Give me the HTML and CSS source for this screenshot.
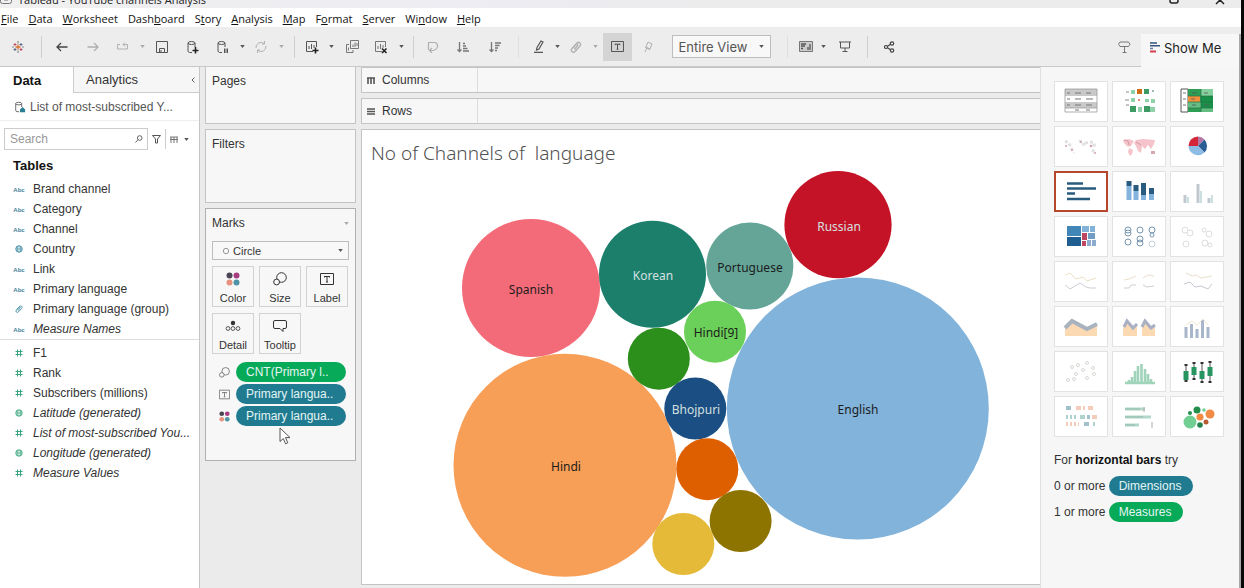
FILE: index.html
```html
<!DOCTYPE html>
<html lang="en">
<head>
<meta charset="utf-8">
<title>Tableau - YouTube channels Analysis</title>
<link rel="stylesheet" href="styles.css">
</head>
<body>
<svg class="defs" aria-hidden="true">
  <symbol id="caret" viewBox="0 0 6 4"><path d="M0 0h6L3 4z" fill="currentColor"/></symbol>
  <symbol id="abc" viewBox="0 0 12 8"><text x="6" y="7" text-anchor="middle" class="abc-text">Abc</text></symbol>
  <symbol id="hash" viewBox="0 0 8 8"><path d="M2.500 .5v7M5.500 .5v7M.5 2.500h7M.5 5.500h7" stroke="currentColor" fill="none"/></symbol>
  <symbol id="globe" viewBox="0 0 8 8"><circle cx="4" cy="4" r="3.200" fill="none" stroke="currentColor"/><path d="M1 4h6M4 1v6M2.500 1.500v5M5.500 1.500v5" stroke="currentColor" stroke-width=".6"/></symbol>
  <symbol id="clip" viewBox="0 0 12 12"><path d="M3 7l4-5a2 2 0 0 1 3 3l-5 5.500a2 2 0 0 1-3-3l4-4.500a1 1 0 0 1 1.500 1.500L4.500 8.500" fill="none" stroke="currentColor" stroke-width="1.300"/></symbol>
  <symbol id="four" viewBox="0 0 14 14"><circle cx="3.500" cy="3.500" r="3" fill="#4a4453"/><circle cx="10.500" cy="3.500" r="3" fill="#a83c80"/><circle cx="3.500" cy="10.500" r="3" fill="#e8917c"/><circle cx="10.500" cy="10.500" r="3" fill="#4f93a8"/></symbol>
  <symbol id="size" viewBox="0 0 14 14"><circle cx="8.500" cy="5.500" r="4.800" fill="none" stroke="currentColor"/><circle cx="3.600" cy="10" r="2.900" fill="#f7f7f7" stroke="currentColor"/></symbol>
  <symbol id="label" viewBox="0 0 14 12"><path d="M.5 .5h13v11H.5zM4.500 3.500h5M7 3.500v5.500M6 9h2M4.500 3v1.500M9.500 3v1.500" fill="none" stroke="currentColor"/></symbol>
  <symbol id="db" viewBox="0 0 14 14"><path d="M6 12.500H3.500Q2 12 2 11V3q0-1.500 3.500-1.500T9 3v4M2 3q0 1.500 3.500 1.500T9 3" fill="none" stroke="currentColor"/></symbol>
  <symbol id="bars" viewBox="0 0 14 14"><path d="M8 11.500H1.500v-10h10V7M4 9V6M6.500 9V4M9 8V5" fill="none" stroke="currentColor"/></symbol>
</svg>
<div class="window">
  <header class="titlebar">
    <svg class="app-icon" viewBox="0 0 12 12" aria-hidden="true"><path d="M.5 0v9.500q0 2 2 2h7q2 0 2-2V0M4 8h4" fill="none" stroke="#777"/></svg>
    <span class="title-text">Tableau - YouTube channels Analysis</span>
    <svg class="win-controls" viewBox="0 0 60 6" aria-hidden="true"><path d="M5 0v1q0 2 2 2h4q2 0 2-2V0M51 4l4-4 4 4" fill="none" stroke="#222" stroke-width="1.500"/></svg>
  </header>
  <nav class="menu" aria-label="Main">
    <a href="#"><u>F</u>ile</a><a href="#"><u>D</u>ata</a><a href="#"><u>W</u>orksheet</a><a href="#">Dash<u>b</u>oard</a><a href="#">S<u>t</u>ory</a><a href="#"><u>A</u>nalysis</a><a href="#"><u>M</u>ap</a><a href="#">F<u>o</u>rmat</a><a href="#"><u>S</u>erver</a><a href="#">Wi<u>n</u>dow</a><a href="#"><u>H</u>elp</a>
  </nav>
  <div class="toolbar">
    <button aria-label="Start page"><svg width="12" height="12" viewBox="0 0 12 12" fill="none"><path d="M6 3.500v5M3.500 6h5" stroke="#d8702c" stroke-width="1.300"/><path d="M6 0v2.500M6 9.500V12" stroke="#777"/><path d="M3 2v3M1.500 3.500h3M9 7v3M7.500 8.500h3" stroke="#c2506a"/><path d="M9 2v3M7.500 3.500h3M3 7v3M1.500 8.500h3" stroke="#59698a"/><path d="M0 6h2M10 6h2" stroke="#888"/></svg></button>
    <span class="sep"></span>
    <button aria-label="Undo"><svg width="12" height="10" viewBox="0 0 12 10"><path d="M5 1L1 5l4 4M1 5h10.500" fill="none" stroke="#444" stroke-width="1.300"/></svg></button>
    <button class="dim" aria-label="Redo"><svg width="12" height="10" viewBox="0 0 12 10"><path d="M7 1l4 4-4 4M11 5H.5" fill="none" stroke="currentColor" stroke-width="1.300"/></svg></button>
    <button class="dim" aria-label="Replay"><svg width="13" height="9" viewBox="0 0 13 9"><path d="M4 2.500H1.500v4.500h10V2.500H7M9 .5l-2 2 2 2" fill="none" stroke="currentColor"/></svg></button>
    <svg class="caret dim"><use href="#caret"/></svg>
    <button aria-label="Save"><svg width="12" height="12" viewBox="0 0 12 12"><path d="M.5 .5h11v11H.5zM3.500 11V7.500h5V11M5 9v2" fill="none" stroke="currentColor"/></svg></button>
    <button aria-label="New data source"><svg width="14" height="14"><use href="#db"/><path d="M9.500 7v6.500M6.500 10.500h6" stroke="#222" stroke-width="1.600"/></svg></button>
    <button aria-label="Pause auto updates"><svg width="14" height="14"><use href="#db"/><path d="M8 8.500h1.500V13H8zM10.500 8.500H12V13h-1.500z" fill="#555"/></svg></button>
    <svg class="caret"><use href="#caret"/></svg>
    <button class="dim" aria-label="Refresh"><svg width="12" height="12" viewBox="0 0 12 12"><path d="M1 7a5 5 0 0 1 8-4.500M11 5a5 5 0 0 1-8 4.500M9.500 0v3H7M2.500 12V9H5" fill="none" stroke="currentColor"/></svg></button>
    <svg class="caret dim"><use href="#caret"/></svg>
    <span class="sep"></span>
    <button aria-label="New worksheet"><svg width="14" height="14"><use href="#bars"/><path d="M10.500 7.500v6M7.500 10.500h6" stroke="#222" stroke-width="1.600"/></svg></button>
    <svg class="caret"><use href="#caret"/></svg>
    <button class="mid" aria-label="Duplicate"><svg width="13" height="13" viewBox="0 0 13 13"><path d="M4.500 .5h8v8h-8zM3 4.500H.5v8H7V10M7 7V4.500M9 7V2.500M11 6V3M2.500 10.500V7.500" fill="none" stroke="currentColor"/></svg></button>
    <button class="mid" aria-label="Clear sheet"><svg width="14" height="14"><use href="#bars"/><path d="M8 8.500l4.500 4.500M12.500 8.500L8 13" stroke="#222" stroke-width="1.600"/></svg></button>
    <svg class="caret"><use href="#caret"/></svg>
    <span class="sep"></span>
    <button class="dim" aria-label="Swap rows and columns"><svg width="12" height="12" viewBox="0 0 12 12"><path d="M1.500 9V1.500h6.500q3 1 2.500 4T6 9.500H3M5 7L2.500 9.500 5 12" fill="none" stroke="currentColor" stroke-width="1.200"/></svg></button>
    <button class="mid" aria-label="Sort ascending"><svg width="12" height="12" viewBox="0 0 12 12"><path d="M2.500 1v9.500M.5 8.500l2 2 2-2M6 2.500h2M6 5h3M6 7.500h4.500M6 10h6" fill="none" stroke="currentColor" stroke-width="1.300"/></svg></button>
    <button class="mid" aria-label="Sort descending"><svg width="12" height="12" viewBox="0 0 12 12"><path d="M2.500 1v9.500M.5 8.500l2 2 2-2M6 2h6M6 4.500h4.500M6 7h3M6 9.500h2" fill="none" stroke="currentColor" stroke-width="1.300"/></svg></button>
    <span class="sep faint"></span>
    <button aria-label="Highlight"><svg width="11" height="13" viewBox="0 0 11 13"><path d="M3 7.500L7 1l2 1-4 7-2.500 1zM0 12.300h9" fill="none" stroke="currentColor" stroke-width="1.200"/></svg></button>
    <svg class="caret"><use href="#caret"/></svg>
    <button class="dim" aria-label="Group members"><svg width="12" height="12"><use href="#clip"/></svg></button>
    <svg class="caret dim"><use href="#caret"/></svg>
    <button class="pressed" aria-label="Show mark labels" aria-pressed="true"><svg width="13" height="11"><use href="#label"/></svg></button>
    <button class="dim" aria-label="Fix axes"><svg width="9" height="12" viewBox="0 0 9 12"><path d="M4 1l4 2-2 5-4-2zM1 6l5 3M3 7l-2 4" fill="none" stroke="currentColor"/></svg></button>
    <div class="combo fit"><select aria-label="Fit"><option>Entire View</option></select><svg class="caret"><use href="#caret"/></svg></div>
    <span class="sep faint"></span>
    <button class="mid" aria-label="Show cards"><svg width="14" height="11" viewBox="0 0 14 11"><path d="M.5 .5h13v10H.5z" fill="#ccc" stroke="currentColor"/><path d="M2 3h5M2 5h4M2 7.500h2M9 9V6M11 9V3" stroke="#555" stroke-width="1.300"/></svg></button>
    <svg class="caret"><use href="#caret"/></svg>
    <button aria-label="Presentation mode"><svg width="12" height="11" viewBox="0 0 12 11"><path d="M0 1h12M1.500 1v6h9V1M6 7v3M3.500 10.500h5" fill="none" stroke="currentColor"/></svg></button>
    <span class="sep"></span>
    <button aria-label="Share"><svg width="11" height="12" viewBox="0 0 11 12" fill="none" stroke="#444" stroke-width="1.200"><circle cx="2" cy="6" r="1.500"/><circle cx="8" cy="2.500" r="1.700"/><circle cx="8" cy="9.500" r="1.700"/><path d="M3.500 5.300l3-2M3.500 6.800l3 2"/></svg></button>
    <span></span>
    <button class="mid" aria-label="Data guide"><svg width="13" height="12" viewBox="0 0 13 12"><path d="M2 1h8.500L12 3.200 10.500 5.500H2L.5 3.200zM6.500 5.500V11M4.500 11.500h4" fill="none" stroke="currentColor"/></svg></button>
    <button class="showme-tab"><svg width="10" height="11" viewBox="0 0 10 11"><path d="M0 1h7M0 3.700h10" stroke="#33557f" stroke-width="1.600"/><path d="M0 6.500h3" stroke="#6f7fa0" stroke-width="1.600"/><path d="M0 9.500h6" stroke="#d63f4d" stroke-width="2"/></svg>Show Me</button>
  </div>
  <main class="workspace">
    <aside class="data-pane">
      <div class="tabs"><button class="tab active">Data</button><button class="tab">Analytics<svg width="4" height="6" viewBox="0 0 4 6"><path d="M3.500 .5L1 3l2.500 2.500" fill="none" stroke="#666"/></svg></button></div>
      <div class="source"><svg width="12" height="12" viewBox="0 0 14 14"><use href="#db"/><path d="M10 7l3 3v3H7v-3z" fill="#2a7f92"/></svg><span>List of most-subscribed Y...</span></div>
      <div class="search-row">
        <div class="search"><input type="text" placeholder="Search" aria-label="Search"><svg width="8" height="8" viewBox="0 0 8 8"><circle cx="4.700" cy="3" r="2.300" fill="none" stroke="#666"/><path d="M3 4.700L.5 7.500" stroke="#666"/></svg></div>
        <button aria-label="Filter fields"><svg width="9" height="9" viewBox="0 0 9 9"><path d="M.5 .5h8L5.500 4v4h-2V4z" fill="none" stroke="#555"/></svg></button>
        <button class="view-as" aria-label="View as"><svg width="8" height="7" viewBox="0 0 8 7"><path d="M0 1h8M0 3.500h8M1 1v6M4 1v6M7 1v6" stroke="#777"/></svg><svg class="caret"><use href="#caret"/></svg></button>
      </div>
      <h2>Tables</h2>
      <ul class="fields dims">
        <li><svg class="wide"><use href="#abc"/></svg>Brand channel</li>
        <li><svg class="wide"><use href="#abc"/></svg>Category</li>
        <li><svg class="wide"><use href="#abc"/></svg>Channel</li>
        <li><svg><use href="#globe"/></svg>Country</li>
        <li><svg class="wide"><use href="#abc"/></svg>Link</li>
        <li><svg class="wide"><use href="#abc"/></svg>Primary language</li>
        <li><svg><use href="#clip"/></svg>Primary language (group)</li>
        <li class="gen"><svg class="wide"><use href="#abc"/></svg>Measure Names</li>
      </ul>
      <ul class="fields measures">
        <li><svg><use href="#hash"/></svg>F1</li>
        <li><svg><use href="#hash"/></svg>Rank</li>
        <li><svg><use href="#hash"/></svg>Subscribers (millions)</li>
        <li class="gen"><svg><use href="#globe"/></svg>Latitude (generated)</li>
        <li class="gen"><svg><use href="#hash"/></svg>List of most-subscribed You...</li>
        <li class="gen"><svg><use href="#globe"/></svg>Longitude (generated)</li>
        <li class="gen"><svg><use href="#hash"/></svg>Measure Values</li>
      </ul>
    </aside>
    <section class="cards">
      <div class="card pages"><h3>Pages</h3></div>
      <div class="card filters"><h3>Filters</h3></div>
      <div class="card marks">
        <h3>Marks<svg class="caret dim"><use href="#caret"/></svg></h3>
        <div class="combo mark-type"><svg class="ring" viewBox="0 0 8 8"><circle cx="4" cy="4" r="2.700" fill="none" stroke="#999"/></svg><select aria-label="Mark type"><option>Circle</option></select><svg class="caret"><use href="#caret"/></svg></div>
        <div class="mark-buttons">
          <button><svg width="14" height="14"><use href="#four"/></svg>Color</button>
          <button><svg width="14" height="14"><use href="#size"/></svg>Size</button>
          <button><svg width="14" height="14"><use href="#label"/></svg>Label</button>
          <button><svg width="16" height="14" viewBox="0 0 16 14"><circle cx="8" cy="4" r="2.200" fill="#333"/><g fill="none" stroke="#555"><circle cx="3" cy="9.500" r="1.900"/><circle cx="8" cy="9.500" r="1.900"/><circle cx="13" cy="9.500" r="1.900"/></g></svg>Detail</button>
          <button><svg width="14" height="14" viewBox="0 0 14 14"><path d="M2 1.500h10q1.500 0 1.500 1.500v5q0 1.500-1.500 1.500h-2v3l-3-3H2Q.5 9.500.5 8V3q0-1.500 1.500-1.500z" fill="none" stroke="currentColor"/></svg>Tooltip</button>
        </div>
        <ul class="pills">
          <li><svg><use href="#size"/></svg><button class="pill green">CNT(Primary l..</button></li>
          <li><svg><use href="#label"/></svg><button class="pill blue">Primary langua..</button></li>
          <li><svg><use href="#four"/></svg><button class="pill blue">Primary langua..</button></li>
        </ul>
        <svg class="cursor" viewBox="0 0 12 18" aria-hidden="true"><path d="M1 1v13.500l3.300-3 2.300 5.300 2.200-1-2.300-5.200H11z" fill="#fff" stroke="#555"/></svg>
      </div>
    </section>
    <section class="sheet-area">
      <div class="shelf"><span><svg width="8" height="7" viewBox="0 0 8 7"><path d="M0 1h8M1 1v6M4 1v6M7 1v6" stroke="#555" stroke-width="1.600"/></svg>Columns</span></div>
      <div class="shelf"><span><svg width="8" height="7" viewBox="0 0 8 7"><path d="M0 1h8M0 3.500h8M0 6h8" stroke="#555" stroke-width="1.400"/></svg>Rows</span></div>
      <article class="sheet">
        <h1>No of Channels of  language</h1>
        <svg class="bubbles" viewBox="362 170 678 414" role="img" aria-label="Packed bubbles by language">
          <circle cx="531" cy="288" r="69" fill="#f36b79"/>
          <circle cx="652.500" cy="274.200" r="53.500" fill="#1b7f6c"/>
          <circle cx="749.800" cy="266" r="43.600" fill="#64a598"/>
          <circle cx="838" cy="224.700" r="53.600" fill="#c41226"/>
          <circle cx="857.800" cy="408.500" r="131" fill="#82b3da"/>
          <circle cx="565" cy="465.300" r="111.500" fill="#f79e57"/>
          <circle cx="715" cy="331.700" r="31" fill="#6bd059"/>
          <circle cx="658.800" cy="358.700" r="31" fill="#2c8f1c"/>
          <circle cx="695.300" cy="408.500" r="31" fill="#1b4e82"/>
          <circle cx="707.300" cy="469.200" r="31" fill="#de5f00"/>
          <circle cx="740.600" cy="521" r="31" fill="#8d7400"/>
          <circle cx="683.300" cy="544" r="31" fill="#e4ba38"/>
          <text x="531" y="294">Spanish</text>
          <text class="light" x="653" y="280">Korean</text>
          <text x="750" y="272">Portuguese</text>
          <text class="light" x="839" y="231">Russian</text>
          <text x="858" y="414">English</text>
          <text x="566" y="471">Hindi</text>
          <text x="716" y="337">Hindi[9]</text>
          <text class="light" x="696" y="414">Bhojpuri</text>
        </svg>
      </article>
    </section>
    <aside class="showme">
      <div class="thumbs">
        <button aria-label="Text table"><svg viewBox="0 0 54 41"><path d="M11 8h32v7H11zM11 21h32v6H11z" fill="#c9c9c9"/><path d="M11 8h32v23H11zM11 27h32" fill="none" stroke="#999" stroke-width=".8"/><path d="M13 12h3M21 12h6M32 12h5M13 18h3M21 18h6M32 18h7M13 24h3M21 24h6M32 24h6M21 29h4M32 29h4" stroke="#777"/></svg></button>
        <button aria-label="Heat map"><svg viewBox="0 0 54 41"><path d="M14 11h3M13 19h4M14 24h3" stroke="#888"/><g fill="#8fd1a8"><path d="M19 9h4v4h-4zM19 17h4v4h-4zM33 18h4v3h-4zM39 18h4v4h-4zM26 26h4v5h-4zM38 26h5v5h-5z"/></g><g fill="#3c9b63"><path d="M32 8h5v5h-5zM18 25h6v6h-6zM32 25h6v6h-6z"/></g><path d="M25 8h5v5h-5z" fill="#cf6b12"/><path d="M26 18h2v2h-2z" fill="#e58a70"/><path d="M40 9h2v2h-2z" fill="#9ba"/></svg></button>
        <button aria-label="Highlight table"><svg viewBox="0 0 54 41"><path d="M11 8h7v23h-7z" fill="#fff" stroke="#555"/><path d="M18 8h13v23H18z" fill="#2f9e55"/><path d="M31 8h12v23H31z" fill="#85cf9d"/><path d="M31 15h12v12H31z" fill="#189048"/><path d="M18 15h12v6H18z" fill="#f2903c"/><path d="M18 21h13v6H18zM31 27h12v4H31z" fill="#64bd82"/><path d="M18 15h25M18 21h25M18 27h25M31 8v23" stroke="#2a7048" stroke-width=".7"/><path d="M13 12h3M13 18h3M13 24h3M22 12h5M34 12h4M21 18h4M22 24h4M34 24h5" stroke="#555" stroke-width=".8"/></svg></button>
        <button aria-label="Symbol map"><svg viewBox="0 0 54 41"><path d="M11 15l4 2 2 5 3 5M25 15l4 1 1 4M31 17l8-1 2 5M38 24l4 3" fill="none" stroke="#e2e0e0" stroke-width="3" stroke-dasharray="3 2"/><g fill="#cfa5ad"><circle cx="12" cy="20" r="1"/><circle cx="18" cy="24" r="1"/><circle cx="27" cy="16" r="1"/><circle cx="37" cy="20" r="1.300"/><circle cx="41" cy="27" r="1"/></g></svg></button>
        <button aria-label="Filled map"><svg viewBox="0 0 54 41"><path d="M11 14l6-1 5 2-3 5-3 1-4-4zM17 22l4 2-1 4-2 2-2-4zM24 14l7-1 12 1-1 4-3 5-3-4-3 4-3-3-1 7-3-2-2-5-2-3z" fill="#f5c3ca"/><path d="M39 25l4 0v3h-4z" fill="#d9a6af"/><path d="M12 14l4 1 1 4M24 16l5 3" fill="none" stroke="#d499a4"/></svg></button>
        <button aria-label="Pie chart"><svg viewBox="0 0 54 41"><path d="M28 20V10.500a9.500 9.500 0 0 0-9.500 9.500z" fill="#d32638"/><path d="M28 20V10.500a9.500 9.500 0 0 1 6.500 3z" fill="#b676a5"/><path d="M28 20l6.500-6.500a9.500 9.500 0 0 1 0 13z" fill="#295d94"/><path d="M28 20l6.500 6.500A9.500 9.500 0 0 1 18.500 20z" fill="#8dbce5"/></svg></button>
        <button class="selected" aria-label="Horizontal bars"><svg viewBox="0 0 54 41"><path d="M13 12.500h16M13 17.500h29M13 22.500h8M13 28h23" stroke="#285b7d" stroke-width="2.600"/></svg></button>
        <button aria-label="Stacked bars"><svg viewBox="0 0 54 41"><path d="M17 15v14M24 20v9M31.500 24v5M39.500 22v7" stroke="#84b4de" stroke-width="5"/><path d="M17 10v5M24 14v6M31.500 12v12M39.500 17v6" stroke="#285b7d" stroke-width="5"/></svg></button>
        <button aria-label="Side-by-side bars"><svg viewBox="0 0 54 41"><path d="M15 32v-8M28 32V13M39 32v-5" stroke="#bfc9cf" stroke-width="3"/><path d="M18 32v-6M31 32V20M42 32v-8" stroke="#ccdfe0" stroke-width="2"/></svg></button>
        <button aria-label="Treemap"><svg viewBox="0 0 54 41"><path d="M13 10h14v10H13z" fill="#4286b8"/><path d="M13 21h14v9H13z" fill="#205d91"/><path d="M28 10h7v6h-7zM36 10h5v6h-5z" fill="#82b2d7"/><path d="M28 17h5v7h-5zM28 25h4v5h-4z" fill="#bd4661"/><path d="M34 17h7v6h-7z" fill="#719dc3"/><path d="M33 24h4v6h-4zM38 24h4v6h-4z" fill="#8eacd0"/></svg></button>
        <button aria-label="Circle views"><svg viewBox="0 0 54 41" fill="none" stroke="#7896b2"><circle cx="16" cy="14" r="3"/><circle cx="16" cy="17" r="3"/><circle cx="28" cy="14" r="3"/><circle cx="40" cy="14" r="3"/><circle cx="16" cy="26" r="3"/><circle cx="28" cy="23" r="3"/><circle cx="28" cy="27" r="3"/><circle cx="40" cy="19" r="2"/><circle cx="40" cy="28" r="3" stroke="#c2d3e0"/></svg></button>
        <button aria-label="Side-by-side circles"><svg viewBox="0 0 54 41" fill="none" stroke="#dedede"><circle cx="15" cy="14" r="3"/><circle cx="20" cy="17" r="3"/><circle cx="16" cy="28" r="3"/><circle cx="34" cy="14" r="2"/><circle cx="39" cy="18" r="3"/><circle cx="35" cy="27" r="3"/><circle cx="40" cy="29" r="2"/></svg></button>
        <button aria-label="Continuous lines"><svg viewBox="0 0 54 41" fill="none"><path d="M11 14l5-2 6 6 7-2 4 4 9-3" stroke="#ecdfc4"/><path d="M11 24l5 4 10-6 6 4 4 1h6" stroke="#cfcdd6"/></svg></button>
        <button aria-label="Discrete lines"><svg viewBox="0 0 54 41" fill="none"><path d="M12 19l5-1 7-3M31 17l5-3 6 1" stroke="#eadfca"/><path d="M12 27h5l2-3h5M31 24l4 2 7-1" stroke="#cecdd3"/></svg></button>
        <button aria-label="Dual lines"><svg viewBox="0 0 54 41" fill="none"><path d="M16 12l6 3 4-1 5 3 11-2" stroke="#e9e0cc"/><path d="M14 23l6-2 5 5 6-1 7 3 4-5" stroke="#c8c8d2"/></svg></button>
        <button aria-label="Continuous area"><svg viewBox="0 0 54 41"><path d="M11 21l7-8 15 8 10-4v13H11z" fill="#fad9b3"/><path d="M11 22l7-7 15 8 10-5" fill="none" stroke="#a9b3bf" stroke-width="4"/></svg></button>
        <button aria-label="Discrete area"><svg viewBox="0 0 54 41"><path d="M11 30v-8l4-7 5 7 5-5v13zM30 30V18l3-4 6 7 4-2v11z" fill="#fad9b3"/><path d="M12 21l3-6 6 7 4-4M30 21l3-6 6 7 4-3" fill="none" stroke="#a9b0c4" stroke-width="3"/></svg></button>
        <button aria-label="Dual combination"><svg viewBox="0 0 54 41"><path d="M16 32V21M21.500 32V18M27 32v-9M32.500 32V14M38 32V21" stroke="#a7b6ca" stroke-width="3"/><path d="M16 19l6-4 5 4 6-6 5 6" fill="none" stroke="#ece6cf"/></svg></button>
        <button aria-label="Scatter plot"><svg viewBox="0 0 54 41" fill="none" stroke="#d6dad4"><circle cx="14" cy="29" r="1.500"/><circle cx="20" cy="28" r="1.500"/><circle cx="22" cy="23" r="1.500"/><circle cx="18" cy="16" r="1.500"/><circle cx="24" cy="14" r="1.500"/><circle cx="29" cy="19" r="1.500"/><circle cx="33" cy="12" r="1.500"/><circle cx="39" cy="17" r="1.500"/><circle cx="33" cy="27" r="1.500"/><circle cx="40" cy="23" r="1.500"/></svg></button>
        <button aria-label="Histogram"><svg viewBox="0 0 54 41"><path d="M13 32h30M17 32v-3M20 32v-6M23 32V20M26 32V15M29.500 32V13M33 32V18M36 32v-9M39 32v-4" fill="none" stroke="#9fd4bb" stroke-width="2.600"/></svg></button>
        <button aria-label="Box plot"><svg viewBox="0 0 54 41"><path d="M16 14v17M24 12v17M32 12v19M40 11v20" stroke="#555"/><path d="M16 20v9M24 16v8M32 20v8M40 16v9" stroke="#269560" stroke-width="5" /><path d="M14.500 14h3M22.500 12h3M30.500 12h3M38.500 11h3M14.500 30h3M22.500 28h3M30.500 31h3M38.500 31h3" stroke="#333" stroke-width="2"/></svg></button>
        <button aria-label="Gantt"><svg viewBox="0 0 54 41"><path d="M12 12h5M33 21h3M30 28h5" stroke="#a3c1cd" stroke-width="4"/><path d="M22 12h5M29 12h2M34 12h5M38 21h5M12 28h2M16 28h2M20 28h2M24 28h1" stroke="#f3ccba" stroke-width="4"/><path d="M12 21h2M16 21h2M20 21h2M26 21h5M39 28h2" stroke="#aed3cc" stroke-width="4"/></svg></button>
        <button aria-label="Bullet graph"><svg viewBox="0 0 54 41"><path d="M13 13h20M13 21h26M13 29h14" stroke="#b1d8c8" stroke-width="3"/><path d="M13 13h15M13 21h18M13 29h10" stroke="#93b9aa"/><path d="M32 11v5M40 26v6" stroke="#aaa"/></svg></button>
        <button aria-label="Packed bubbles"><svg viewBox="0 0 54 41"><circle cx="20" cy="26" r="6.500" fill="#71cf94"/><circle cx="27" cy="14" r="3.500" fill="#218e4c"/><circle cx="20" cy="17" r="2" fill="#218e4c"/><circle cx="30" cy="21" r="3.600" fill="#f18a42"/><circle cx="40" cy="18" r="4.500" fill="#f18a42"/><circle cx="30" cy="29" r="2.800" fill="#23834c"/><circle cx="36" cy="26" r="2.500" fill="#b65b32"/><circle cx="34" cy="14" r="1.800" fill="#71cf94"/></svg></button>
      </div>
      <div class="hint">
        <p>For <b>horizontal bars</b> try</p>
        <p>0 or more <span class="pill blue">Dimensions</span></p>
        <p>1 or more <span class="pill green">Measures</span></p>
      </div>
    </aside>
  </main>
</div>
</body>
</html>
```

FILE: styles.css
```css
* { box-sizing: border-box; }
body { margin: 0; font-family: "Liberation Sans", Arial, sans-serif; font-size: 12px; color: #333; background: #ebebeb; }
button, select, input { font: inherit; color: inherit; margin: 0; }
button { border: 0; padding: 0; background: none; }
h1, h2, h3, p, ul { margin: 0; padding: 0; font-weight: normal; }
ul { list-style: none; }
.defs { position: absolute; width: 0; height: 0; }
.window { min-height: 100vh; display: flex; flex-direction: column; border-right: 3px solid #080808; }

.titlebar { height: 8px; overflow: hidden; display: flex; align-items: flex-end; gap: 6px; background: linear-gradient(90deg, #f0f0f0, #ececf2 40%, #ececec 60%); }
.title-text { font: 11px/16px "Open Sans", sans-serif; color: #222; flex: 1; }
.app-icon { width: 12px; height: 12px; align-self: flex-end; margin-bottom: 4px; flex: none; }
.win-controls { width: 60px; height: 6px; margin: 0 16px 2px 0; }
.menu { display: flex; gap: 10px; height: 19px; padding-left: 1px; background: #fff; align-items: center; font: 11px/16px "Open Sans", sans-serif; }
.menu a { color: #111; text-decoration: none; padding-top: 2px; }

.toolbar {
  display: grid; height: 40px; align-items: center; justify-items: center; background: #ededed; border-bottom: 1px solid #c9c9c9; color: #555;
  grid-template-columns: 36px 10px 32px 30px 28px 12px 28px 34px 26px 12px 26px 14px 12px 24px 14px 28px 30px 10px 14px 26px 34px 30px 16px 26px 10px 28px 10px 35px 26px 120px 12px 25px 10px 34px 10px 34px 1fr 34px 100px;
}
.toolbar button { display: flex; align-items: center; justify-content: center; height: 28px; }
.sep { width: 1px; height: 22px; background: #cfcfcf; }
.sep.faint { background: #dedede; }
.dim { color: #b0b0b0; }
.mid { color: #777; }
.caret { width: 5px; height: 3px; color: #555; }
.caret.dim { color: #aaa; }
.toolbar .pressed { width: 29px; background: #d4d4d4; color: #444; }
.combo { display: grid; grid-template-columns: 1fr 16px; align-items: center; justify-items: center; border: 1px solid #bdbdbd; background: #f8f8f8; }
.combo select { grid-area: 1 / 1 / 2 / 3; width: 100%; appearance: none; border: 0; background: none; padding: 0 6px; }
.combo .caret { grid-area: 1 / 2; pointer-events: none; }
.fit { width: 99px; height: 23px; font: 13px "Inter", sans-serif; }
.toolbar .showme-tab { align-self: end; width: 100%; height: 33px; margin-bottom: -1px; padding: 0 12px 6px 9px; gap: 4px; justify-content: flex-start; background: #f7f7f7; border-right: 2px solid #a8a8a8; font: 13px "Inter", sans-serif; color: #222; }

.workspace { flex: 1; display: grid; grid-template-columns: 200px 150px minmax(300px, 1fr) 201px; }
.data-pane { background: #fff; border-right: 1px solid #c6c6c6; }
.tabs { display: grid; grid-template-columns: 73px 1fr; height: 26px; }
.tab { display: flex; align-items: center; justify-content: space-between; font-size: 13px; background: #f6f6f6; border: solid #ccc; border-width: 0 0 1px 1px; padding: 0 4px 0 12px; }
.tab.active { background: #fff; border: 0; font-weight: bold; color: #111; padding-left: 13px; }
.source { display: flex; align-items: center; gap: 4px; height: 28px; padding-left: 14px; border-bottom: 1px solid #eee; color: #555; }
.search-row { display: flex; align-items: center; gap: 4px; padding: 7px 8px 0 4px; }
.search { display: flex; align-items: center; width: 144px; height: 22px; border: 1px solid #ccc; padding-right: 4px; }
.search input { flex: 1; min-width: 0; border: 0; padding: 0 5px; background: none; outline: 0; }
.search input::placeholder { color: #999; opacity: 1; }
.search-row button { display: flex; align-items: center; gap: 6px; height: 20px; }
.search-row .view-as { padding-left: 4px; border-left: 1px solid #ccc; }
.data-pane h2 { font-size: 13px; line-height: 20px; font-weight: bold; color: #111; padding: 6px 0 3px 13px; }
.fields li { display: grid; grid-template-columns: 12px 1fr; column-gap: 8px; align-items: center; line-height: 20px; height: 20px; padding-left: 13px; white-space: nowrap; }
.fields svg { width: 8px; height: 8px; justify-self: center; color: #3a8aa0; }
.fields svg.wide { width: 12px; }
.abc-text { font: bold 6px "Liberation Sans", sans-serif; fill: #3f7f98; }
.dims { border-bottom: 1px solid #ddd; }
.measures { padding-top: 3px; }
.measures svg { color: #3aa57c; }
.gen { font-style: italic; }

.cards { display: flex; flex-direction: column; gap: 5px; width: 151px; margin-left: 5px; }
.card { background: #f7f7f7; border: 1px solid #c4c4c4; padding: 5px 6px; }
.card h3 { font-size: 12px; line-height: 18px; display: flex; justify-content: space-between; align-items: center; }
.pages { height: 57px; border-top: 0; }
.filters { height: 74px; }
.marks { position: relative; height: 253px; border-color: #b0b0b0; }
.mark-type { height: 19px; margin-top: 9px; width: 137px; font-size: 11px; }
.mark-type select { padding-left: 20px; }
.ring { grid-area: 1 / 1; width: 8px; height: 8px; justify-self: start; margin-left: 9px; }
.mark-buttons { display: grid; grid-template-columns: repeat(3, 42px); gap: 6px 5px; padding-top: 6px; }
.mark-buttons button { display: flex; flex-direction: column; align-items: center; justify-content: flex-end; gap: 4px; height: 41px; border: 1px solid #d2d2d2; font-size: 11px; line-height: 16px; }
.pills { display: flex; flex-direction: column; gap: 2px; padding: 8px 0 0 7px; }
.pills li { display: flex; align-items: center; gap: 6px; }
.pills svg { width: 11px; height: 11px; color: #666; }
.pill { height: 20px; border-radius: 10px; padding: 0 12px 0 10px; font-size: 12px; line-height: 20px; color: #e4f5f5; white-space: nowrap; }
.pills .pill { width: 110px; text-align: left; }
.green { background: #07aa58; }
.blue { background: #217b90; }
.cursor { position: absolute; left: 73px; top: 218px; width: 12px; height: 18px; }

.sheet-area { display: flex; flex-direction: column; gap: 5px; margin-left: 11px; padding-bottom: 3px; }
.shelf { height: 26px; background: #f7f7f7; border: 1px solid #c4c4c4; border-right: 0; display: flex; }
.shelf span { display: flex; align-items: center; gap: 7px; width: 116px; padding-left: 5px; border-right: 1px solid #ddd; }
.sheet { flex: 1; display: flex; flex-direction: column; background: #fff; border: 1px solid #c4c4c4; border-right: 0; }
.sheet h1 { font: 300 19px/24px "Noto Sans", sans-serif; white-space: pre; padding: 11px 0 5px 9px; color: #505050; }
.bubbles { flex: 1; min-height: 0; width: 100%; }
.bubbles text { font: 12px "Noto Sans", sans-serif; text-anchor: middle; fill: #1c1c1c; }
.bubbles .light { fill: #d5e0e0; }

.showme { background: #f6f6f6; border-left: 1px solid #e0e0e0; border-right: 2px solid #a8a8a8; padding: 14px 14px 0 13px; }
.thumbs { display: grid; grid-template-columns: repeat(3, 54px); grid-auto-rows: 41px; gap: 4px; justify-content: start; }
.thumbs button { background: #fff; outline: 1px solid #e2e2e2; outline-offset: -1px; }
.thumbs svg { display: block; width: 100%; height: 100%; }
.thumbs .selected { outline: 2px solid #b5482c; outline-offset: -2px; }
.hint { padding-top: 13px; display: flex; flex-direction: column; gap: 6px; white-space: nowrap; }
.hint p { display: flex; align-items: center; line-height: 20px; white-space: pre; }
.hint b { color: #111; }
```
